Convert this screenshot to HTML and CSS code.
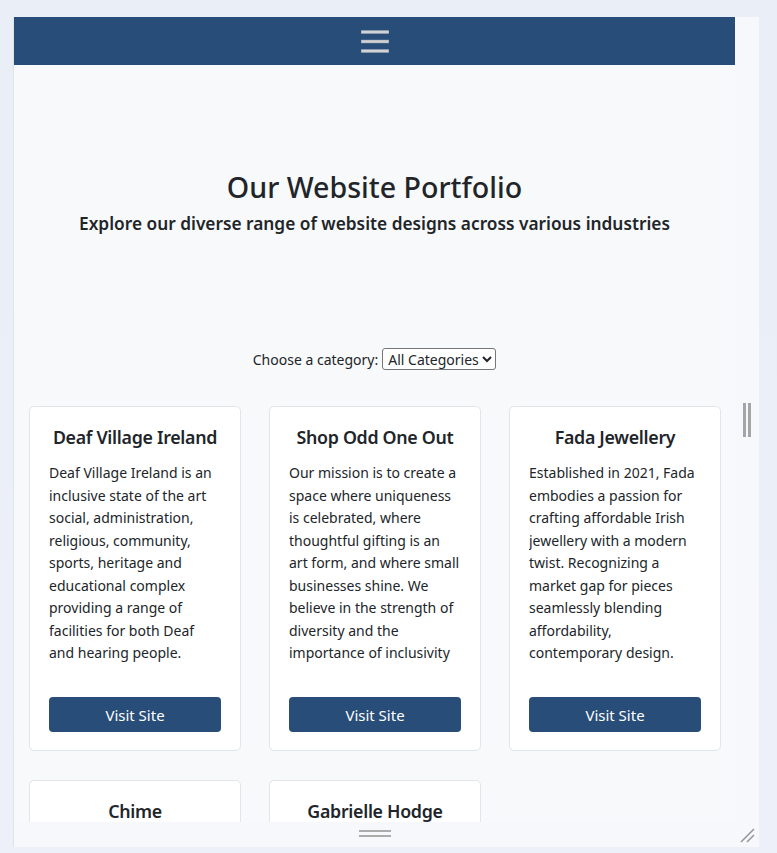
FILE: index.html
```html
<!DOCTYPE html>
<html lang="en">
<head>
<meta charset="utf-8">
<title>Our Website Portfolio</title>
<link rel="stylesheet" href="styles.css">
</head>
<body>
<div class="frame">
  <div class="viewport">
    <div class="page">
      <nav class="topbar">
        <button class="toggler" aria-label="Menu">
          <svg width="30" height="24" viewBox="0 0 30 24">
            <g stroke="#8d9aab" stroke-width="3.6"><path d="M1 3h28M1 12.5h28M1 22h28"/></g>
            <g stroke="#d2d3d5" stroke-width="2.4"><path d="M1.5 3h27M1.5 12.5h27M1.5 22h27"/></g>
          </svg>
        </button>
      </nav>
      <header class="hero">
        <h1 class="hero-title">Our Website Portfolio</h1>
        <p class="hero-sub">Explore our diverse range of website designs across various industries</p>
      </header>
      <div class="filter">
        <label for="cat">Choose a category:</label>
        <select id="cat" class="select">
          <option>All Categories</option>
        </select>
      </div>
      <section class="grid">
        <article class="card">
          <h2 class="card-title">Deaf Village Ireland</h2>
          <p class="card-text">Deaf Village Ireland is an inclusive state of the art social, administration, religious, community, sports, heritage and educational complex providing a range of facilities for both Deaf and hearing people.</p>
          <a class="btn" href="#">Visit Site</a>
        </article>
        <article class="card">
          <h2 class="card-title">Shop Odd One Out</h2>
          <p class="card-text">Our mission is to create a space where uniqueness is celebrated, where thoughtful gifting is an art form, and where small businesses shine. We believe in the strength of diversity and the importance of inclusivity</p>
          <a class="btn" href="#">Visit Site</a>
        </article>
        <article class="card">
          <h2 class="card-title">Fada Jewellery</h2>
          <p class="card-text">Established in 2021, Fada embodies a passion for crafting affordable Irish jewellery with a modern twist. Recognizing a market gap for pieces seamlessly blending affordability, contemporary design.</p>
          <a class="btn" href="#">Visit Site</a>
        </article>
        <article class="card">
          <h2 class="card-title">Chime</h2>
          <p class="card-text">Chime is a national charity for deafness and hearing loss, providing services and support across Ireland.</p>
          <a class="btn" href="#">Visit Site</a>
        </article>
        <article class="card">
          <h2 class="card-title">Gabrielle Hodge</h2>
          <p class="card-text">Personal academic website showcasing research, publications and projects.</p>
          <a class="btn" href="#">Visit Site</a>
        </article>
      </section>
    </div>
    <div class="gutter">
      <div class="thumb"></div>
    </div>
  </div>
  <div class="resize-bar">
    <span class="grip"></span>
    <svg class="corner" width="16" height="16" viewBox="0 0 16 16">
      <path d="M2 15L15 2M8 15L15 8" stroke="#9a9a9a" stroke-width="1.6" fill="none"/>
    </svg>
  </div>
</div>
</body>
</html>
```
FILE: styles.css
```css
* { box-sizing: border-box; }

html, body {
  margin: 0;
  height: 100%;
}

body {
  background: linear-gradient(180deg, #e9eef7 0%, #edf0f8 100%);
  padding: 17px 0 0 13px;
  font-family: "Noto Sans", "Open Sans", sans-serif;
  color: #212529;
  overflow: hidden;
}

.frame {
  width: 746px;
  height: 830px;
  background: #f7f8fc;
  border-left: 1px solid #dfe3ea;
  display: flex;
  flex-direction: column;
}

.viewport {
  height: 805px;
  display: flex;
  overflow: hidden;
  background: #f8f9fa;
}

.page {
  width: 721px;
  flex: none;
}

.gutter {
  flex: 1;
  background: #f7f8fb;
  padding: 386px 0 0 8px;
}

.thumb {
  width: 8px;
  height: 34px;
  border-left: 3px solid #a5a5a5;
  border-right: 3px solid #a5a5a5;
}

.topbar {
  height: 48px;
  background: #274d78;
  display: flex;
  justify-content: center;
  align-items: center;
}

.toggler {
  background: none;
  border: 0;
  padding: 0;
  display: flex;
  margin-left: 1px;
}

.hero {
  text-align: center;
  padding-top: 105px;
}

.hero-title {
  margin: 0;
  font-size: 28.6px;
  font-weight: 500;
  line-height: 34px;
}

.hero-sub {
  margin: 8px 0 0;
  font-size: 17.3px;
  font-weight: 600;
  line-height: 24px;
}

.filter {
  margin-top: 111px;
  display: flex;
  justify-content: center;
  align-items: center;
  gap: 4px;
  font-size: 14px;
  height: 24px;
}

.select {
  font-family: inherit;
  font-size: 14px;
  color: #212529;
  height: 22px;
  padding: 0 0 0 1px;
  border: 1px solid #767676;
  border-radius: 3px;
  background: #fff;
}

.grid {
  margin-top: 35px;
  padding: 0 14px 0 15px;
  display: grid;
  grid-template-columns: repeat(3, 212px);
  column-gap: 28px;
  row-gap: 29px;
}

.card {
  background: #fff;
  border: 1px solid #e2e5e9;
  border-radius: 5px;
  padding: 18px 19px 18px;
  display: flex;
  flex-direction: column;
}

.card-title {
  margin: 0;
  text-align: center;
  font-size: 17.8px;
  font-weight: 600;
  letter-spacing: -0.3px;
  line-height: 24px;
  white-space: nowrap;
}

.card-text {
  margin: 13px 0 0;
  font-size: 14px;
  line-height: 22.5px;
  height: 203px;
  overflow: hidden;
}

.btn {
  margin-top: 32px;
  height: 35px;
  border-radius: 4px;
  background: #274d78;
  color: #fff;
  text-decoration: none;
  display: flex;
  justify-content: center;
  align-items: center;
  font-size: 15px;
}

.resize-bar {
  flex: 1;
  display: flex;
  justify-content: center;
  align-items: center;
  position: relative;
  background: #f7f8fc;
}

.grip {
  width: 32px;
  height: 7px;
  border-top: 2px solid #ababab;
  border-bottom: 2px solid #ababab;
  margin-left: -23px;
  margin-top: -2px;
}

.corner {
  position: absolute;
  right: 4px;
  bottom: 4px;
}
```
